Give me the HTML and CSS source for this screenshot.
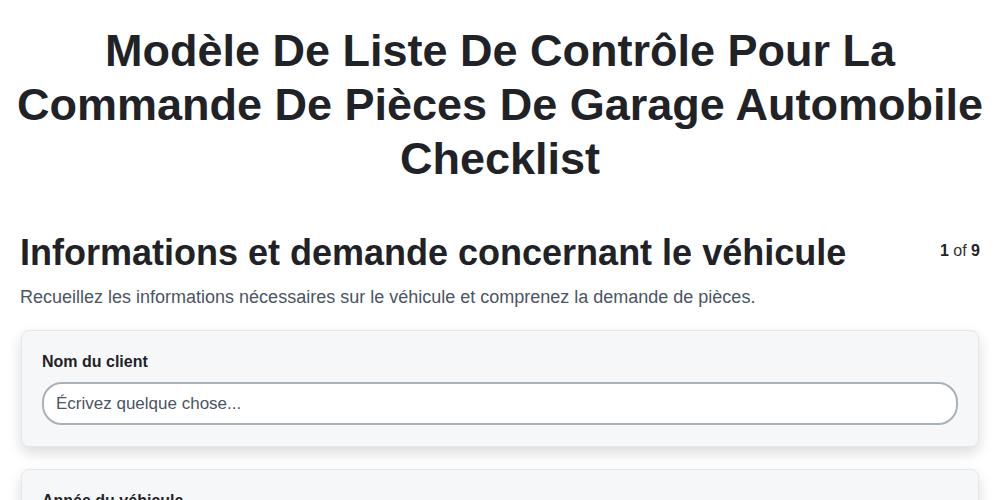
FILE: index.html
```html
<!DOCTYPE html>
<html lang="fr">
<head>
    <meta charset="utf-8">
    <title>Checklist</title>
    <link rel="stylesheet" href="styles.css">
</head>
<body>
<div class="page">
    <h1 class="title">Modèle De Liste De Contrôle Pour La Commande De Pièces De Garage Automobile Checklist</h1>

    <div class="section-head">
        <h2>Informations et demande concernant le véhicule</h2>
        <span class="step"><b>1</b> of <b>9</b></span>
    </div>
    <p class="intro">Recueillez les informations nécessaires sur le véhicule et comprenez la demande de pièces.</p>

    <div class="card">
        <label for="client">Nom du client</label>
        <input type="text" id="client" placeholder="Écrivez quelque chose...">
    </div>

    <div class="card">
        <label for="annee">Année du véhicule</label>
        <input type="text" id="annee" placeholder="Écrivez quelque chose...">
    </div>
</div>
</body>
</html>
```

FILE: styles.css
```css
body {
    margin: 0;
    font-family: "Liberation Sans", Arial, sans-serif;
    color: #1f2328;
    background: #fff;
}

.page {
    padding: 0 20px;
}

.title {
    margin: 24px -14px 0;
    font-size: 45px;
    line-height: 54px;
    text-align: center;
    font-weight: bold;
}

.section-head {
    display: flex;
    justify-content: space-between;
    align-items: flex-start;
    margin-top: 45px;
}

.section-head h2 {
    margin: 0;
    font-size: 36px;
    line-height: 44px;
}

.step {
    font-size: 16px;
    color: #333;
    padding-top: 11px;
}

.step b {
    color: #1f2328;
}

.intro {
    margin: 12px 0 22px;
    font-size: 18px;
    color: #4b5563;
}

.card {
    background: #f6f7f9;
    border: 1px solid #e5e7eb;
    border-radius: 8px;
    box-shadow: 0 6px 14px rgba(0, 0, 0, 0.14);
    padding: 22px 20px 21px;
    margin: 0 1px 22px;
}

.card label {
    display: block;
    font-size: 16px;
    font-weight: bold;
    margin-bottom: 11px;
}

.card input {
    display: block;
    box-sizing: border-box;
    width: 100%;
    height: 43px;
    border: 2px solid #a9b1b9;
    border-radius: 20px;
    padding: 0 12px;
    font-family: inherit;
    font-size: 17px;
    background: #fff;
}

.card input::placeholder {
    color: #4b5563;
}
```
